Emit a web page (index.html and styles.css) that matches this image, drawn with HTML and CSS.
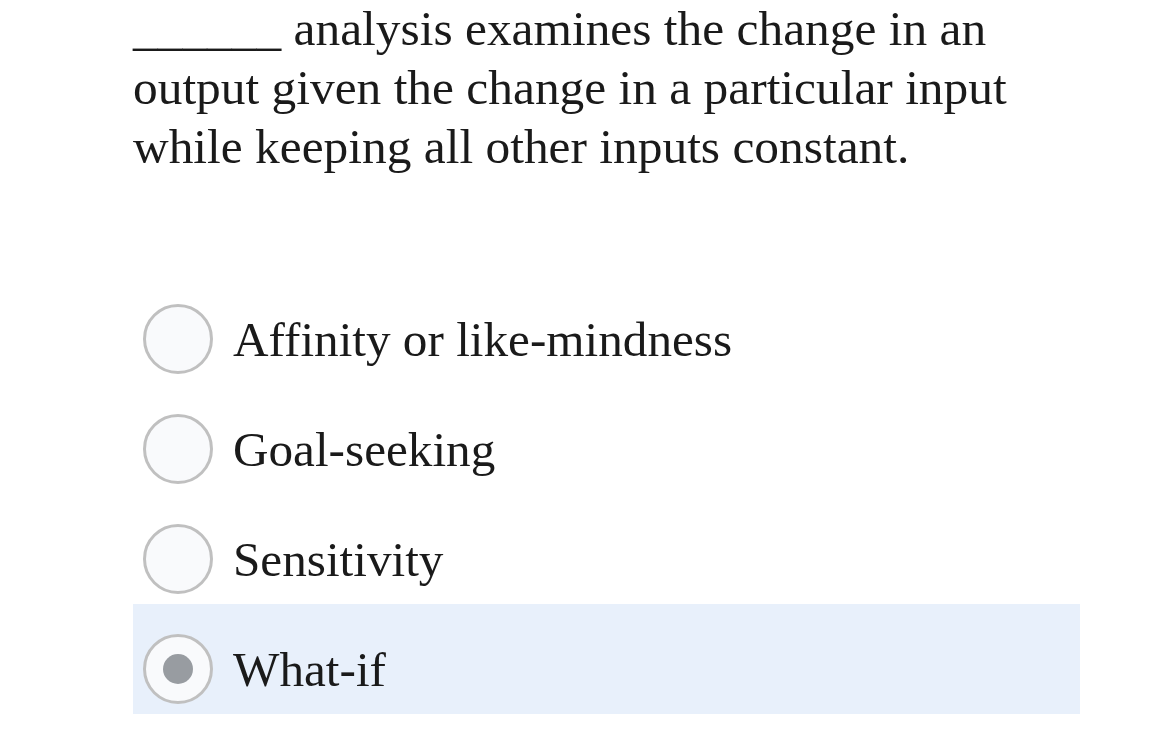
FILE: index.html
```html
<!DOCTYPE html>
<html>
<head>
<meta charset="utf-8">
<link rel="stylesheet" href="styles.css">
</head>
<body>
<div class="quiz">
  <p class="question">______ analysis examines the change in an output given the change in a particular input while keeping all other inputs constant.</p>
  <div class="options">
    <div class="option"><span class="radio"></span><span class="label">Affinity or like-mindness</span></div>
    <div class="option"><span class="radio"></span><span class="label">Goal-seeking</span></div>
    <div class="option"><span class="radio"></span><span class="label">Sensitivity</span></div>
    <div class="option selected"><span class="radio"><span class="dot"></span></span><span class="label">What-if</span></div>
  </div>
</div>
</body>
</html>
```
FILE: styles.css
```css
html, body {
  margin: 0;
  padding: 0;
  background: #ffffff;
}
.quiz {
  width: 947px;
  margin-left: 133px;
  font-family: "Liberation Serif", "Times New Roman", serif;
  color: #1a1a1a;
}
.question {
  margin: -1px 0 0 0;
  font-size: 49.4px;
  line-height: 59px;
}
.options {
  margin-top: 98px;
  display: flex;
  flex-direction: column;
}
.option {
  height: 110px;
  box-sizing: border-box;
  padding: 20px 10px 0 10px;
  display: flex;
  align-items: center;
  gap: 20px;
}
.option.selected {
  background: #e8f0fb;
}
.radio {
  width: 70px;
  height: 70px;
  box-sizing: border-box;
  border: 3px solid #c0c0c0;
  border-radius: 50%;
  background: #f9fafc;
  display: flex;
  align-items: center;
  justify-content: center;
  flex: none;
}
.dot {
  width: 30px;
  height: 30px;
  border-radius: 50%;
  background: #989ca1;
}
.label {
  font-size: 49.2px;
  line-height: 59px;
}
```
